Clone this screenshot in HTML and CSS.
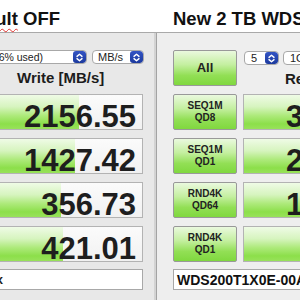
FILE: index.html
```html
<!DOCTYPE html>
<html>
<head>
<meta charset="utf-8">
<link rel="stylesheet" href="styles.css">
</head>
<body>
<div class="titles">
  <div class="title title-left"><span class="title-text"><span class="misspelled">Default</span> OFF</span></div>
  <div class="title title-right">New 2 TB WDS200T1X0E</div>
</div>
<div class="windows">
  <section class="pane pane-left">
    <div class="top">
      <div class="selects">
        <div class="select select-drive"><span class="select-text">1863GiB (6% used)</span><span class="stepper"><svg viewBox="0 0 13 13" width="13" height="13"><path d="M4 5.4 L6.5 3.2 L9 5.4 M4 7.6 L6.5 9.8 L9 7.6" fill="none" stroke="#fff" stroke-width="1.4" stroke-linecap="round" stroke-linejoin="round"/></svg></span></div>
        <div class="select select-unit"><span class="select-text">MB/s</span><span class="stepper"><svg viewBox="0 0 13 13" width="13" height="13"><path d="M4 5.4 L6.5 3.2 L9 5.4 M4 7.6 L6.5 9.8 L9 7.6" fill="none" stroke="#fff" stroke-width="1.4" stroke-linecap="round" stroke-linejoin="round"/></svg></span></div>
      </div>
      <div class="col-head col-head-write">Write [MB/s]</div>
    </div>
    <div class="result result-left" style="background-size: 98px 100%"><span class="value">2156.55</span></div>
    <div class="result result-left" style="background-size: 94px 100%"><span class="value">1427.42</span></div>
    <div class="result result-left" style="background-size: 80px 100%"><span class="value">356.73</span></div>
    <div class="result result-left" style="background-size: 82px 100%"><span class="value">421.01</span></div>
    <div class="textbox textbox-left">Apple SSD AP2048Z Max</div>
  </section>
  <div class="divider"></div>
  <section class="pane pane-right">
    <div class="grid">
      <button class="btn btn-all">All</button>
      <div class="top-right">
        <div class="selects-right">
          <div class="select select-count"><span class="select-text">5</span><span class="stepper"><svg viewBox="0 0 13 13" width="13" height="13"><path d="M4 5.4 L6.5 3.2 L9 5.4 M4 7.6 L6.5 9.8 L9 7.6" fill="none" stroke="#fff" stroke-width="1.4" stroke-linecap="round" stroke-linejoin="round"/></svg></span></div>
          <div class="select select-size"><span class="select-text">1GiB</span></div>
        </div>
        <div class="col-head col-head-read">Read [MB/s]</div>
      </div>
      <button class="btn"><span>SEQ1M</span><span>QD8</span></button>
      <div class="result result-right" style="background-size: 160px 100%"><span class="value">3504.62</span></div>
      <button class="btn"><span>SEQ1M</span><span>QD1</span></button>
      <div class="result result-right" style="background-size: 152px 100%"><span class="value">2785.19</span></div>
      <button class="btn"><span>RND4K</span><span>QD64</span></button>
      <div class="result result-right" style="background-size: 140px 100%"><span class="value">1640.87</span></div>
      <button class="btn"><span>RND4K</span><span>QD1</span></button>
      <div class="result result-right" style="background-size: 115px 100%"><span class="value">82.45</span></div>
    </div>
    <div class="textbox textbox-right">WDS200T1X0E-00AFY0 2000.3 GB</div>
  </section>
</div>
</body>
</html>
```
FILE: styles.css
```css
html, body {
  margin: 0;
  padding: 0;
}
body {
  width: 300px;
  height: 300px;
  overflow: hidden;
  background: #ffffff;
  font-family: "Liberation Sans", Arial, sans-serif;
  color: #1e1e1e;
}
.titles {
  display: grid;
  grid-template-columns: 157px 1fr;
  height: 32px;
  background: #ffffff;
}
.title {
  font-weight: bold;
  font-size: 18.5px;
  line-height: 19px;
  padding-top: 9px;
  white-space: nowrap;
  color: #111;
}
.title-left {
  display: flex;
  justify-content: flex-end;
  padding-right: 97px;
  min-width: 0;
}
.title-text {
  flex: none;
}
.title-right {
  padding-left: 16px;
  overflow: hidden;
}
.misspelled {
  text-decoration: underline wavy #e0332f;
  text-decoration-thickness: 1px;
  text-underline-offset: 3px;
}
.windows {
  display: grid;
  grid-template-columns: 154px 3px 1fr;
  height: 268px;
  border-top: 1px solid #a9a9a9;
}
.pane {
  overflow: hidden;
  padding-top: 17px;
  box-sizing: border-box;
}
.pane-left {
  background: #e8e8e8;
  display: flex;
  flex-direction: column;
  gap: 8px;
  padding-right: 11px;
}
.divider {
  background: #d3d3d3;
  border-right: 1px solid #a3a3a3;
}
.pane-right {
  background: #eeeeee;
  padding-left: 16px;
}
.top {
  height: 36px;
}
.selects {
  display: flex;
  justify-content: flex-end;
  gap: 5px;
  margin-right: -1px;
}
.select {
  height: 14px;
  box-sizing: border-box;
  border: 1px solid #a8a8a8;
  border-radius: 4px;
  background: #ffffff;
  display: flex;
  align-items: center;
  font-size: 11px;
  color: #222;
  white-space: nowrap;
  overflow: hidden;
}
.select-drive {
  width: 150px;
  flex: none;
  justify-content: flex-end;
  font-size: 10.5px;
}
.select-drive .select-text {
  margin-right: 30px;
}
.select-unit {
  width: 52px;
  flex: none;
  padding-left: 5px;
}
.select-unit .select-text {
  flex: 1;
}
.stepper {
  width: 13px;
  height: 12px;
  border-radius: 3px;
  background: linear-gradient(#3354c4, #1c3a9e);
  display: flex;
  align-items: center;
  justify-content: center;
  flex: none;
}
.stepper svg {
  display: block;
}
.col-head {
  font-weight: bold;
  font-size: 15px;
  line-height: 16px;
  margin-top: 6px;
  white-space: nowrap;
  color: #1c1c1c;
}
.col-head-write {
  padding-left: 17px;
}
.col-head-read {
  padding-left: 42px;
}
.result {
  height: 36px;
  box-sizing: border-box;
  border: 1px solid #b3b3b3;
  background: linear-gradient(to bottom, #effbe6 0%, #d6f4be 35%, #aeea7c 60%, #8cdf4a 85%, #98e25a 100%) no-repeat, linear-gradient(#fbfbfb, #f1f1f1);
  display: flex;
  align-items: center;
  justify-content: flex-end;
  padding-top: 8px;
  padding-right: 6px;
  white-space: nowrap;
}
.result-left {
  margin-left: -20px;
}
.value {
  font-weight: bold;
  font-size: 31px;
  line-height: 31px;
  color: #1e1e1e;
}
.grid {
  display: grid;
  grid-template-columns: 64px 162px;
  grid-template-rows: 36px 36px 36px 36px 36px;
  column-gap: 6px;
  row-gap: 8px;
}
.btn {
  height: 36px;
  margin: 0;
  padding: 0;
  box-sizing: border-box;
  border: 1px solid #999999;
  border-radius: 2px;
  background: linear-gradient(to bottom, #eaf9de 0%, #c4efa0 40%, #92df55 72%, #80d83f 100%);
  font-family: "Liberation Sans", Arial, sans-serif;
  font-weight: bold;
  font-size: 10px;
  line-height: 12px;
  color: #222;
  display: flex;
  flex-direction: column;
  align-items: center;
  justify-content: center;
}
.btn-all {
  font-size: 13px;
}
.selects-right {
  display: flex;
  gap: 4px;
  padding-left: 1px;
  margin-top: 1px;
}
.select-count {
  width: 35px;
  flex: none;
  padding-left: 6px;
}
.select-count .select-text {
  flex: 1;
}
.select-size {
  width: 70px;
  flex: none;
  padding-left: 6px;
}
.textbox {
  height: 21px;
  box-sizing: border-box;
  border: 1px solid #a8a8a8;
  background: #ffffff;
  white-space: nowrap;
  overflow: hidden;
  display: flex;
  align-items: center;
}
.textbox-left {
  margin-top: -1px;
  margin-left: -20px;
  justify-content: flex-end;
  padding-right: 139px;
  font-size: 13px;
  font-weight: bold;
}
.textbox-right {
  margin-top: 7px;
  width: 200px;
  padding-left: 3px;
  font-size: 14px;
  font-weight: bold;
  color: #111;
}
```
